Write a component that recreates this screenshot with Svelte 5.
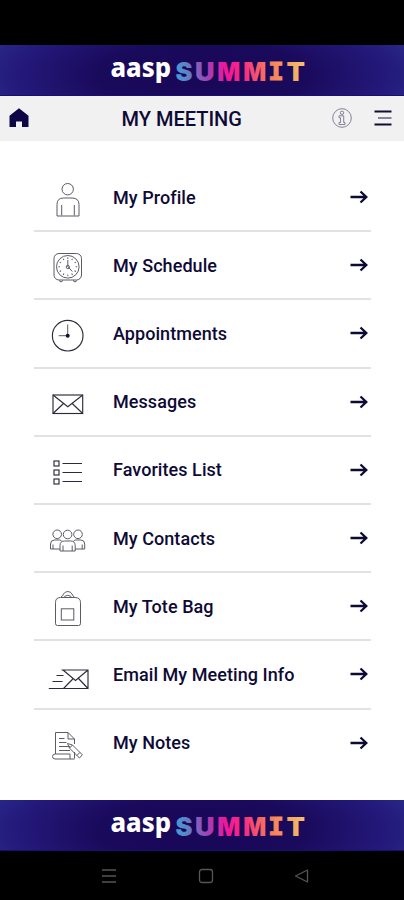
<script>
    const items = [
        { icon: 'profile', label: 'My Profile' },
        { icon: 'schedule', label: 'My Schedule' },
        { icon: 'appointments', label: 'Appointments' },
        { icon: 'messages', label: 'Messages' },
        { icon: 'favorites', label: 'Favorites List' },
        { icon: 'contacts', label: 'My Contacts' },
        { icon: 'tote', label: 'My Tote Bag' },
        { icon: 'email', label: 'Email My Meeting Info' },
        { icon: 'notes', label: 'My Notes' }
    ];

    const ticks = [0, 30, 60, 90, 120, 150, 180, 210, 240, 270, 300, 330];
</script>

{#snippet banner(id)}
    <div class="banner">
        <svg width="404" height="51" viewBox="0 0 404 51" role="img" aria-label="aasp SUMMIT">
            <defs>
                <linearGradient id={id} gradientUnits="userSpaceOnUse" x1="176" y1="36" x2="304" y2="16">
                    <stop offset="0" stop-color="#3f9fd6" />
                    <stop offset="0.12" stop-color="#6878c4" />
                    <stop offset="0.26" stop-color="#a63db4" />
                    <stop offset="0.4" stop-color="#f2159a" />
                    <stop offset="0.54" stop-color="#f5307f" />
                    <stop offset="0.7" stop-color="#f7735f" />
                    <stop offset="0.82" stop-color="#f7945a" />
                    <stop offset="1" stop-color="#f3c070" />
                </linearGradient>
            </defs>
            <text class="brand" x="110.5" y="32" textLength="60.500" lengthAdjust="spacingAndGlyphs">aasp</text>
            <g class="summit" fill="url(#{id})">
                <text x="175.5" y="35.500" textLength="17" lengthAdjust="spacingAndGlyphs">S</text>
                <text x="195" y="35.500" textLength="19.500" lengthAdjust="spacingAndGlyphs">U</text>
                <text x="217.300" y="35.500" textLength="23" lengthAdjust="spacingAndGlyphs">M</text>
                <text x="243.300" y="35.500" textLength="23" lengthAdjust="spacingAndGlyphs">M</text>
                <text class="slab" stroke="url(#{id})" x="268.200" y="35" textLength="15.500" lengthAdjust="spacingAndGlyphs">I</text>
                <text x="286.500" y="35.500" textLength="18.500" lengthAdjust="spacingAndGlyphs">T</text>
            </g>
        </svg>
    </div>
{/snippet}

{#snippet menuIcon(name)}
    <svg class="icon" width="44" height="44" viewBox="0 0 44 44">
        {#if name === 'profile'}
            <circle cx="21.7" cy="13.2" r="5.7" />
            <path d="M11 40V28.5Q11 22 17.5 22h8.500Q33 22 33 28.500V40ZM15.700 29v10.500M28.300 29v10.500" />
        {:else if name === 'schedule'}
            <rect x="8" y="9.500" width="27.500" height="26.500" rx="5" />
            <circle cx="21.800" cy="22.800" r="11.300" />
            {#each ticks as angle}
                <path d="M21.800 13.400v1.600" transform="rotate({angle} 21.800 22.800)" />
            {/each}
            <path d="M21.800 16v6.500l4.500 5" />
            <circle cx="21.800" cy="23" r="1.600" />
            <path d="M13 36.500l2 1.500 2-1.500M27 36.500l2 1.500 2-1.500" />
        {:else if name === 'appointments'}
            <circle class="dark" cx="21.700" cy="23.700" r="15.300" />
            <path d="M21.700 12.500v11.200h-9" />
            <circle class="dot" cx="21.700" cy="23.700" r="2" />
        {:else if name === 'messages'}
            <g class="dark">
                <rect x="7" y="14" width="29.700" height="18.500" />
                <path d="M7 14l14.800 11.700 14.900-11.700M7 32.500l10.500-10M36.700 32.500l-10.500-10" />
            </g>
        {:else if name === 'favorites'}
            <g class="dark">
                <rect x="8" y="12" width="5" height="5" />
                <rect x="8" y="21" width="5" height="5" />
                <rect x="8" y="30" width="5" height="5" />
                <path d="M16.500 14.500H36M16.500 23.500H36M16.500 32.500H36" />
            </g>
        {:else if name === 'contacts'}
            <circle cx="11.200" cy="17.300" r="4.300" />
            <circle cx="32" cy="17.300" r="4.300" />
            <circle cx="21.600" cy="17.500" r="4.300" />
            <path d="M14 32H4.500v-5Q4.500 23 8.500 23h5q1.500 0 2.500 1.500M29.200 32h9.500v-5Q38.700 23 34.700 23h-5q-1.500 0-2.500 1.500M7 27.500V32M36.200 27.500V32" />
            <path d="M14 34v-5.500Q14 24 18.500 24h6.200q4.500 0 4.500 4.500V34ZM17 28.500V34M26.200 28.500V34" />
        {:else if name === 'tote'}
            <path d="M15 12q2-1 2.500-3Q19 6.500 21.800 6.500T26 9q.5 2 2.500 3M18.300 11.500Q21.800 9 25.300 11.500" />
            <path d="M9.500 38.500V17.500Q9.500 12.500 14.500 12.500h14.300q5.700 0 5.700 5v21q0 2-2 2h-21q-2 0-2-2Z" />
            <rect x="15.300" y="23.800" width="12.500" height="11.200" />
        {:else if name === 'email'}
            <g class="dark">
                <path d="M15.500 17H42v18.500H17.500l9.300-9.500M17 17l12.500 10.500L42 17M42 35.500l-9.500-10" />
                <path d="M10.500 22.500h7M6.500 28.500h10M2.800 35.500h15" />
            </g>
        {:else if name === 'notes'}
            <path d="M9.500 32V10.500H22l6.500 6.500v5M22 10.500V17h6.500M28.500 30v6.500M13 16.500h5.500M13 20.500h7.500M13 24.500h11M13 28.500h11" />
            <path d="M9.500 32h14.500v5H9Q6.500 37 6.500 34.500T9.500 32M24 37h4.500" />
            <path d="M21.500 21.500l5 1.500 9.800 9.800-2.800 3.200-10-9.800ZM26.500 23l-3 3.200M33.800 30.500l-3 3" />
        {/if}
    </svg>
{/snippet}

<div class="screen">
    <div class="status"></div>

    {@render banner('top-gradient')}

    <header>
        <svg class="home" width="20" height="20" viewBox="0 0 20 20">
            <path d="M.5 7.800L10 .3l9.500 7.500V19H13v-5.500H7V19H.5Z" />
        </svg>
        <h1>MY MEETING</h1>
        <svg class="info" width="20" height="20" viewBox="0 0 20 20">
            <circle cx="10" cy="10" r="9.300" />
            <circle cx="10" cy="4.800" r="1.700" />
            <path d="M7 7.800h4.700v6.700H13v2H7v-2h1.500v-4.700H7Z" />
        </svg>
        <svg class="burger" width="18" height="16" viewBox="0 0 18 16">
            <path d="M.5 1.500h17M.5 14.500h17" />
            <path class="middle" d="M4 8h13.500" />
        </svg>
    </header>

    <ul>
        {#each items as item}
            <li>
                {@render menuIcon(item.icon)}
                <span>{item.label}</span>
                <svg class="arrow" width="18" height="14" viewBox="0 0 18 14">
                    <path d="M.5 7H16M10.500 1.500L16.300 7l-5.800 5.500" />
                </svg>
            </li>
        {/each}
    </ul>

    {@render banner('bottom-gradient')}

    <nav>
        <svg width="16" height="16" viewBox="0 0 16 16"><path d="M1 2h14M1 8h14M1 14h14" /></svg>
        <svg width="16" height="16" viewBox="0 0 16 16"><rect x="1.500" y="1.500" width="13" height="13" rx="2.500" /></svg>
        <svg width="16" height="16" viewBox="0 0 16 16"><path d="M13.500 2v12L1.500 8Z" /></svg>
    </nav>
</div>

<style>
    :global(body) {
        margin: 0;
        background: #000;
    }

    .screen {
        display: flex;
        flex-direction: column;
        width: 404px;
        height: 900px;
        overflow: hidden;
        background: #fff;
        color: #0d0a35;
        font-family: Roboto, "Liberation Sans", sans-serif;
    }

    .status {
        flex: 0 0 45px;
        background: #000;
    }

    .banner {
        flex: 0 0 51px;
        background: radial-gradient(ellipse 230px 75px at 50% 60%, #190757 0%, #1a0a5c 45%, #23197a 80%, #29298a 100%);
        box-shadow: inset 0 -1px #1b0d78;
    }

    .banner svg {
        display: block;
    }

    .brand {
        font: 800 27px "Noto Sans", "Open Sans", sans-serif;
        fill: #fff;
    }

    .summit {
        font: 900 25.500px Inter, sans-serif;
    }

    .slab {
        font: bold 24.500px "DejaVu Sans Mono", monospace;
        stroke-width: 1.200;
    }

    header {
        display: flex;
        align-items: center;
        flex: 0 0 45px;
        box-sizing: border-box;
        padding: 0 12px 0 9px;
        background: #f1f1f2;
    }

    .home {
        margin-bottom: 2px;
        fill: #0d0748;
    }

    h1 {
        flex: 1;
        margin: 1px 0 0 92.500px;
        font-size: 20px;
        font-weight: 500;
        line-height: 24px;
    }

    .info {
        margin: 0 22px 1px 0;
        fill: none;
        stroke: #77778a;
        stroke-width: 0.900;
    }

    .burger {
        margin-bottom: 1px;
        fill: none;
        stroke: #100c35;
        stroke-width: 2;
    }

    .burger .middle {
        stroke: #85859a;
    }

    ul {
        flex: 1;
        margin: 0;
        padding: 23px 33px 0 34px;
        list-style: none;
    }

    li {
        display: flex;
        align-items: center;
        box-sizing: border-box;
        height: 68.200px;
        padding: 0 3px 0 12px;
        border-bottom: 2px solid #e2e2e4;
    }

    li:last-child {
        border-bottom-color: transparent;
    }

    li span {
        flex: 1;
        margin-left: 23px;
        font-size: 18px;
        font-weight: 500;
        letter-spacing: 0.060px;
        white-space: nowrap;
    }

    .icon {
        flex: none;
        position: relative;
        top: 1px;
        fill: none;
        stroke: #5b5b66;
        stroke-width: 1;
    }

    .icon .dark {
        stroke: #2b2b3a;
        stroke-width: 1.150;
    }

    .icon .dot {
        fill: #14122b;
        stroke: none;
    }

    .arrow {
        fill: none;
        stroke: #0d0a35;
        stroke-width: 2.300;
    }

    nav {
        display: flex;
        align-items: center;
        justify-content: space-between;
        flex: 0 0 49px;
        box-sizing: border-box;
        padding: 0 94px 0 101px;
        background: #000;
    }

    nav svg {
        fill: none;
        stroke: #55555a;
        stroke-width: 1.300;
        stroke-linejoin: round;
    }
</style>
